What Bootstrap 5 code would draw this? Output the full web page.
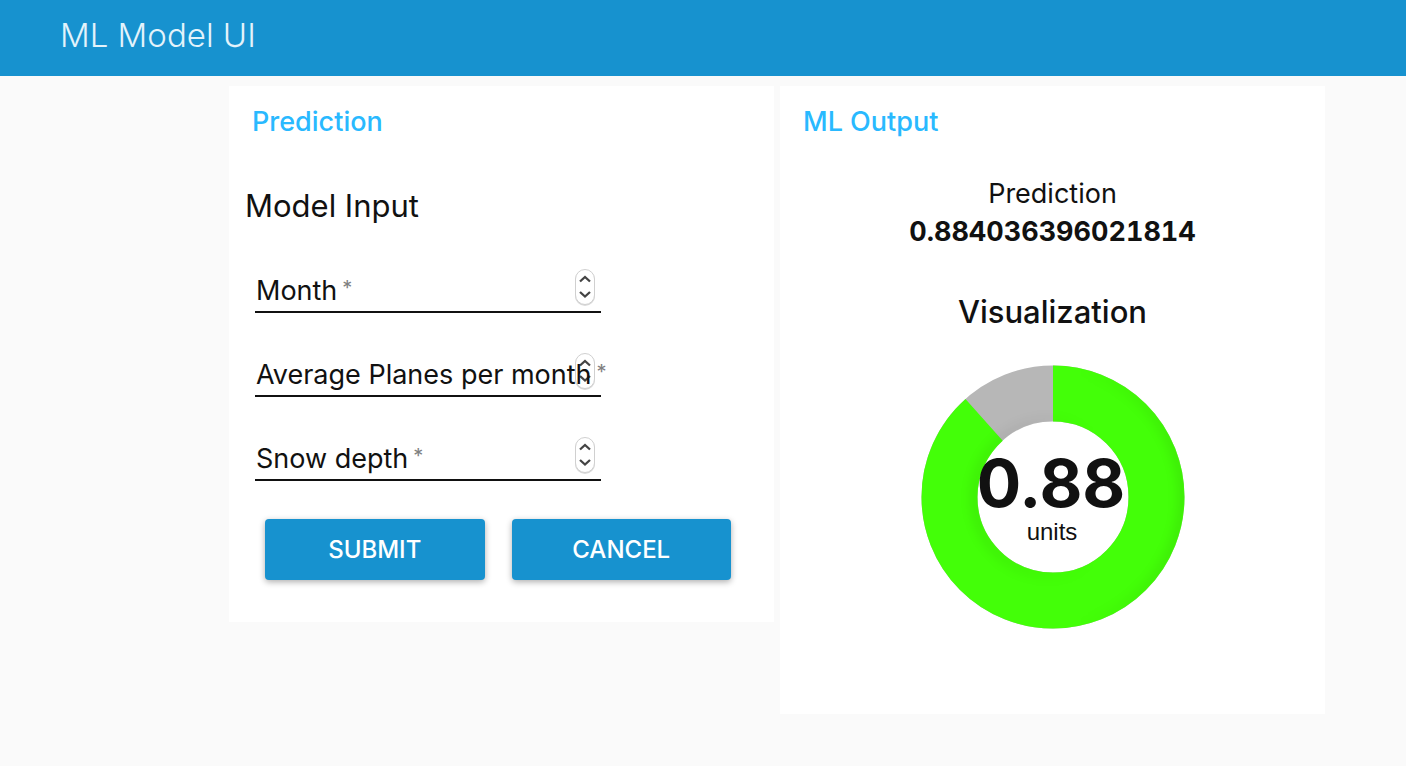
<!DOCTYPE html>
<html lang="en">
<head>
<meta charset="utf-8">
<meta name="viewport" content="width=device-width, initial-scale=1">
<title>ML Model UI</title>
<link href="https://cdn.jsdelivr.net/npm/bootstrap@5.3.0/dist/css/bootstrap.min.css" rel="stylesheet">
<style>
body { font-family: Inter, "Liberation Sans", sans-serif; font-size: 27px; line-height: 38px; color: #111; background: #fafafa; }
.app-bar { background: #1792cf; color: #e3f3fb; height: 76px; padding: 0 60px 6px; }
.app-title { font-size: 33px; font-weight: 300; line-height: 40px; }
.page { padding: 10px 81px 52px 229px; }
.panels { gap: 6px; }
.panel { flex: 1 1 0; min-width: 0; background: #fff; }
.panel-title { font-size: 27px; font-weight: 500; line-height: 36px; color: #29b9ff; padding: 18px 23px 0; }
.form-title { font-size: 31px; font-weight: 400; line-height: 40px; padding: 46px 16px 0; }
.fields { padding: 33px 26px 0; gap: 30px; max-width: 398px; }
.field { border-bottom: 2px solid #111; height: 54px; }
.field input { height: 52px; padding: 0 30px 0 2px; font-size: 27px; appearance: textfield; -moz-appearance: textfield; }
.field input::-webkit-inner-spin-button { appearance: none; -webkit-appearance: none; margin: 0; }
.field label { left: 1px; bottom: 0; line-height: 36px; height: 38px; white-space: nowrap; pointer-events: none; z-index: 1; }
.field label span { color: #808080; font-size: 20px; line-height: 20px; vertical-align: 5px; margin-left: 5px; }
.stepper { right: 4px; top: 8px; }
.actions { padding: 38px 43px 42px 36px; gap: 27px; }
.action { flex: 1 1 0; height: 61px; border: 0; border-radius: 4px; background: #1792cf; color: #fff; font-size: 24px; font-weight: 500; line-height: 60px; padding: 0; box-shadow: 0 2px 6px rgba(0,0,0,.32); }
.action:hover { background: #127fb5; color: #fff; }
.result { padding-top: 35px; }
.result-value { font-variant-numeric: tabular-nums; }
.chart-title { font-size: 31px; font-weight: 500; line-height: 40px; padding-top: 41px; }
.gauge { width: 264px; margin: 33px auto 85px; }
.gauge-value { font: 700 66px Inter, sans-serif; }
.gauge-unit { font: 24px "Liberation Sans", sans-serif; }
@media (max-width: 900px) { .page { padding: 10px; } .panels { flex-direction: column; } .panel { align-self: stretch !important; flex: none; } }
</style>
</head>
<body>
<header class="app-bar d-flex align-items-center"><h1 class="app-title m-0">ML Model UI</h1></header>
<main class="page">
<div class="panels d-flex align-items-start">
<section class="panel">
<h2 class="panel-title m-0">Prediction</h2>
<form>
<h3 class="form-title m-0">Model Input</h3>
<div class="fields d-flex flex-column">
<div class="field position-relative">
<input class="w-100 border-0 bg-transparent" id="month" type="number" required>
<label class="position-absolute" for="month">Month<span>*</span></label>
<svg class="stepper position-absolute" width="24" height="40" viewBox="0 0 24 40" aria-hidden="true"><use href="#step"/></svg>
</div>
<div class="field position-relative">
<input class="w-100 border-0 bg-transparent" id="planes" type="number" required>
<label class="position-absolute" for="planes">Average Planes per month<span>*</span></label>
<svg class="stepper position-absolute" width="24" height="40" viewBox="0 0 24 40" aria-hidden="true"><use href="#step"/></svg>
</div>
<div class="field position-relative">
<input class="w-100 border-0 bg-transparent" id="snow" type="number" required>
<label class="position-absolute" for="snow">Snow depth<span>*</span></label>
<svg class="stepper position-absolute" width="24" height="40" viewBox="0 0 24 40" aria-hidden="true"><use href="#step"/></svg>
</div>
</div>
<div class="actions d-flex">
<button class="action btn" type="submit">SUBMIT</button>
<button class="action btn" type="reset">CANCEL</button>
</div>
</form>
</section>
<section class="panel text-center">
<h2 class="panel-title m-0 text-start">ML Output</h2>
<div class="result">
<div>Prediction</div>
<div class="result-value fw-bold">0.884036396021814</div>
</div>
<h3 class="chart-title m-0">Visualization</h3>
<svg class="gauge d-block" viewBox="0 0 264 264" role="img" aria-label="0.88 units">
<defs>
<linearGradient id="edge"><stop offset=".6" stop-color="#000" stop-opacity="0"/><stop offset="1" stop-color="#000" stop-opacity=".07"/></linearGradient>
<linearGradient id="inner"><stop offset="0" stop-color="#000" stop-opacity=".06"/><stop offset=".8" stop-color="#000" stop-opacity="0"/></linearGradient>
<filter id="soft" x="-20%" y="-20%" width="140%" height="140%"><feGaussianBlur stdDeviation="5"/></filter>
<mask id="ring"><circle cx="132" cy="132" r="103.500" fill="none" stroke="#fff" stroke-width="55"/></mask>
</defs>
<circle cx="132" cy="132" r="103.500" fill="none" stroke="#b7b7b7" stroke-width="56"/>
<circle cx="132" cy="132" r="103.500" fill="none" stroke="#43ff08" stroke-width="56" pathLength="1000" stroke-dasharray="884 116" transform="rotate(-90 132 132)"/>
<g mask="url(#ring)">
<circle cx="132" cy="132" r="131" fill="none" stroke="url(#edge)" stroke-width="14" filter="url(#soft)"/>
<circle cx="130" cy="133" r="76" fill="none" stroke="url(#inner)" stroke-width="12" filter="url(#soft)"/>
</g>
<text class="gauge-value" x="130" y="142" text-anchor="middle" fill="#111">0.88</text>
<text class="gauge-unit" x="131" y="175" text-anchor="middle" fill="#111">units</text>
</svg>
</section>
</div>
</main>
<svg width="0" height="0" class="position-absolute" aria-hidden="true">
<symbol id="step" viewBox="0 0 24 40">
<rect x="2" y="3" width="20" height="36" rx="10" fill="#000" opacity=".15"/>
<rect x="2.500" y="2.500" width="19" height="35" rx="9.500" fill="#fff" stroke="#d0d0d0"/>
<path d="M7 14.500 12 10 17 14.500M7 25 12 29.500 17 25" fill="none" stroke="#444" stroke-width="2.300"/>
</symbol>
</svg>
<script src="https://cdn.jsdelivr.net/npm/bootstrap@5.3.0/dist/js/bootstrap.bundle.min.js"></script>
</body>
</html>
